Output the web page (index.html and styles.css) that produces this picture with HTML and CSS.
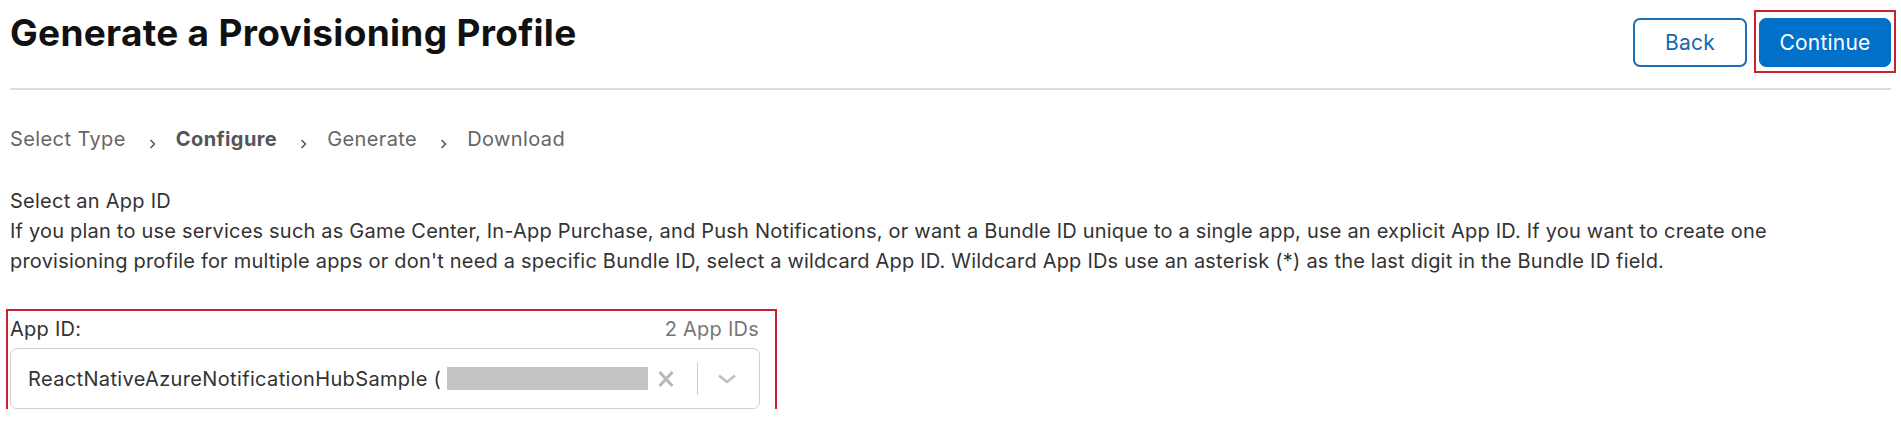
FILE: index.html
```html
<!DOCTYPE html>
<html lang="en">
<head>
<meta charset="utf-8">
<title>Generate a Provisioning Profile</title>
<link rel="stylesheet" href="styles.css">
</head>
<body>
<div class="page">
  <header class="header">
    <h1 class="title">Generate a Provisioning Profile</h1>
    <div class="actions">
      <button class="btn btn-secondary">Back</button>
      <button class="btn btn-primary highlight">Continue</button>
    </div>
  </header>

  <nav class="steps">
    <span class="step">Select Type</span>
    <svg class="chev" width="8" height="10" viewBox="0 0 8 10"><path d="M2 1.5 L5.5 5 L2 8.5" fill="none" stroke="#555" stroke-width="1.6" stroke-linecap="round" stroke-linejoin="round"/></svg>
    <span class="step step-active">Configure</span>
    <svg class="chev" width="8" height="10" viewBox="0 0 8 10"><path d="M2 1.5 L5.5 5 L2 8.5" fill="none" stroke="#555" stroke-width="1.6" stroke-linecap="round" stroke-linejoin="round"/></svg>
    <span class="step">Generate</span>
    <svg class="chev" width="8" height="10" viewBox="0 0 8 10"><path d="M2 1.5 L5.5 5 L2 8.5" fill="none" stroke="#555" stroke-width="1.6" stroke-linecap="round" stroke-linejoin="round"/></svg>
    <span class="step">Download</span>
  </nav>

  <section class="intro">
    <h2 class="intro-title">Select an App ID</h2>
    <p class="intro-text">If you plan to use services such as Game Center, In-App Purchase, and Push Notifications, or want a Bundle ID unique to a single app, use an explicit App ID. If you want to create one provisioning profile for multiple apps or don't need a specific Bundle ID, select a wildcard App ID. Wildcard App IDs use an asterisk (*) as the last digit in the Bundle ID field.</p>
  </section>

  <div class="field highlight-field">
    <div class="field-head">
      <label class="field-label">App ID:</label>
      <span class="field-count">2 App IDs</span>
    </div>
    <div class="select">
      <span class="select-value">ReactNativeAzureNotificationHubSample (</span>
      <span class="redact"></span>
      <svg class="clear" width="16" height="18" viewBox="0 0 16 18"><path d="M1.5 2 L14.5 16 M14.5 2 L1.5 16" stroke="#b8b8b8" stroke-width="3" stroke-linecap="butt"/></svg>
      <span class="divider"></span>
      <svg class="caret" width="20" height="10" viewBox="0 0 20 10"><path d="M2 1.5 L10 8 L18 1.5" fill="none" stroke="#c0c0c0" stroke-width="2.6" stroke-linejoin="round"/></svg>
    </div>
  </div>
</div>
</body>
</html>
```

FILE: styles.css
```css
* { box-sizing: border-box; }

body {
  margin: 0;
  background: #ffffff;
  font-family: Inter, "Liberation Sans", sans-serif;
  color: #333333;
  letter-spacing: 0.25px;
}

.page {
  padding: 0 10px;
}

.header {
  display: flex;
  justify-content: space-between;
  align-items: flex-start;
  height: 90px;
  border-bottom: 2px solid #dcdcdc;
}

.title {
  margin: 11px 0 0 0;
  font-size: 37px;
  line-height: 44px;
  font-weight: 700;
  color: #111111;
  letter-spacing: 0.3px;
}

.actions {
  display: flex;
  gap: 12px;
  margin-top: 18px;
}

.btn {
  height: 49px;
  border-radius: 7px;
  font-family: Inter, "Liberation Sans", sans-serif;
  font-size: 21px;
  letter-spacing: 0.2px;
  cursor: pointer;
}

.btn-secondary {
  width: 114px;
  background: #ffffff;
  border: 2px solid #1f6eb5;
  color: #1b66b0;
}

.btn-primary {
  width: 132px;
  background: #0070c9;
  border: 1px solid #0070c9;
  color: #ffffff;
}

.highlight {
  position: relative;
}

.highlight::after {
  content: "";
  position: absolute;
  top: -9px;
  left: -6px;
  right: -6px;
  bottom: -7px;
  border: 2px solid #c8202f;
  pointer-events: none;
}

.steps {
  display: flex;
  align-items: center;
  margin-top: 34px;
  font-size: 20px;
  line-height: 30px;
  letter-spacing: 0.4px;
  color: #666666;
}

.step-active {
  font-weight: 700;
  color: #555555;
}

.chev {
  margin: 9px 19px 0 23px;
}

.intro {
  margin-top: 32px;
}

.intro-title {
  margin: 0;
  font-size: 20px;
  line-height: 30px;
  font-weight: 400;
  color: #333333;
}

.intro-text {
  max-width: 1790px;
  margin: 0;
  font-size: 20px;
  line-height: 30px;
  letter-spacing: 0.2px;
  color: #333333;
}

.field {
  width: 750px;
  margin-top: 38px;
}

.highlight-field {
  position: relative;
}

.highlight-field::after {
  content: "";
  position: absolute;
  top: -5px;
  left: -4px;
  right: -17px;
  bottom: -8px;
  border: 2px solid #c8202f;
  pointer-events: none;
}

.field-head {
  display: flex;
  justify-content: space-between;
  font-size: 20px;
  line-height: 30px;
}

.field-label {
  color: #333333;
}

.field-count {
  color: #777777;
  margin-right: 1px;
}

.select {
  display: flex;
  align-items: center;
  height: 61px;
  margin-top: 4px;
  padding: 0 22px 0 17px;
  border: 1px solid #cfcfcf;
  border-radius: 7px;
  font-size: 20px;
  line-height: 30px;
  letter-spacing: 0.35px;
  color: #333333;
}

.select-value {
  white-space: nowrap;
}

.redact {
  flex: 1;
  height: 23px;
  margin: 0 10px 0 6px;
  background: #c4c4c4;
}

.clear {
  flex: none;
}

.divider {
  width: 1px;
  height: 33px;
  margin: 0 19px 0 23px;
  background: #cccccc;
}

.caret {
  flex: none;
}
```
